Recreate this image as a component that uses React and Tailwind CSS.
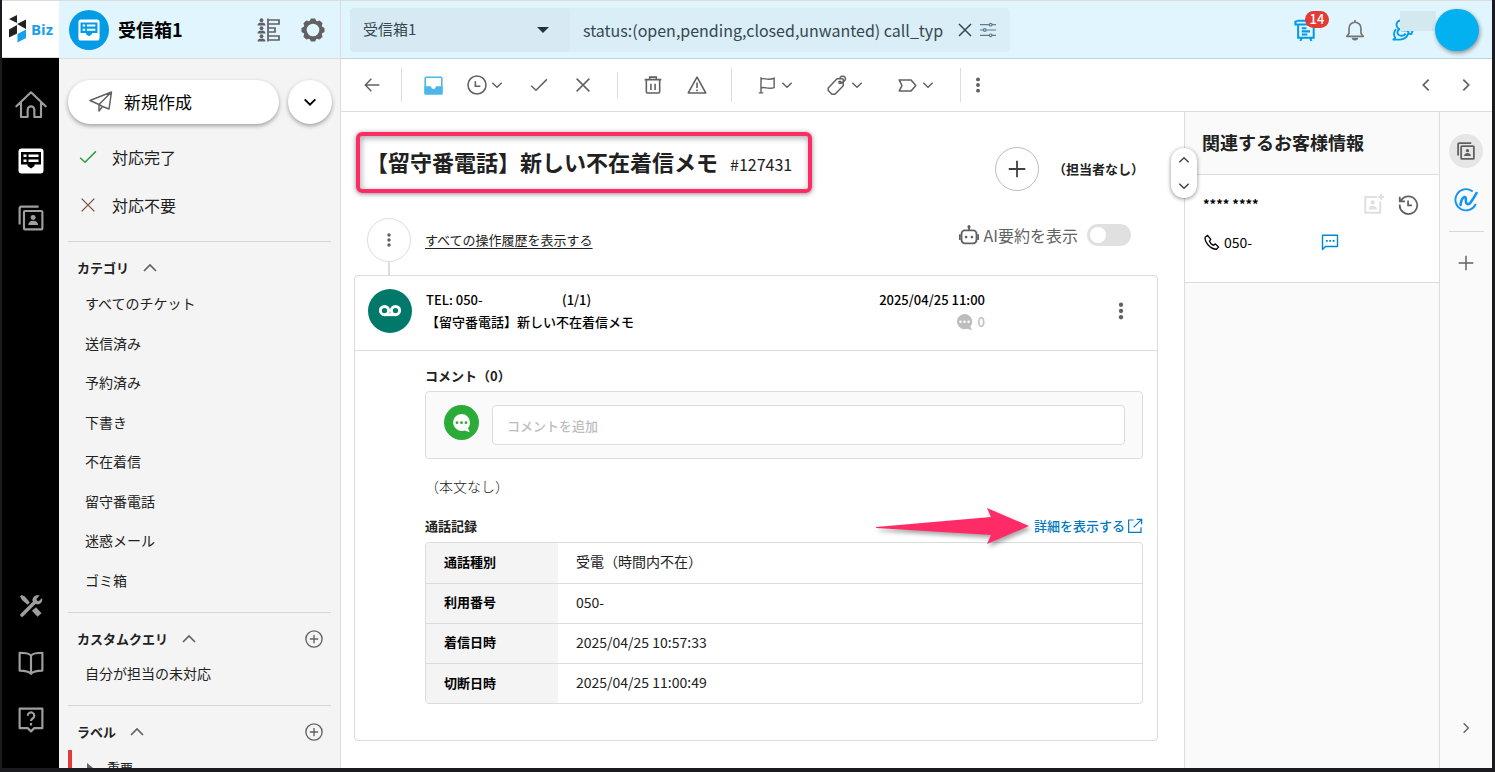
import React from 'react';

const categories = ['すべてのチケット', '送信済み', '予約済み', '下書き', '不在着信', '留守番電話', '迷惑メール', 'ゴミ箱'];

const callRecord = [
  ['通話種別', '受電（時間内不在）'],
  ['利用番号', '050-'],
  ['着信日時', '2025/04/25 10:57:33'],
  ['切断日時', '2025/04/25 11:00:49'],
];

function Icon({ size = 24, sw = 1.5, className = '', children }) {
  return (
    <svg width={size} height={size} viewBox="0 0 24 24" fill="none" stroke="currentColor" strokeWidth={sw} className={`shrink-0 ${className}`} aria-hidden="true">
      {children}
    </svg>
  );
}

const Chevron = ({ dir = 'down', size = 16, sw = 2.4, className }) => {
  const d = { down: 'M4 8l8 8 8-8', up: 'M4 16l8-8 8 8', left: 'M16 4l-8 8 8 8', right: 'M8 4l8 8-8 8' }[dir];
  return <Icon size={size} sw={sw} className={className}><path d={d} /></Icon>;
};

const Dots = ({ size = 20 }) => (
  <Icon size={size}>
    <g fill="currentColor" stroke="none">
      <circle cx="12" cy="4.5" r="2.6" />
      <circle cx="12" cy="12" r="2.6" />
      <circle cx="12" cy="19.5" r="2.6" />
    </g>
  </Icon>
);

const TicketIcon = ({ size = 26, className, cut }) => (
  <svg width={size} height={size} viewBox="0 0 26 26" className={className} aria-hidden="true">
    <rect x="0.5" y="0.5" width="25" height="25" rx="3" fill="#fff" />
    <path d="M3 4h20v12.5h-6.5v1.5L13 20.5 9.5 18v-1.5H3z" fill={cut} />
    <path d="M5.5 6.5h3v2.500h-3zM10.5 6.5h10v2.5h-10zM5.5 11.5h3V14h-3zM10.5 11.5h10V14h-10z" fill="#fff" />
  </svg>
);

const ContactsIcon = ({ size, sw = 2 }) => (
  <Icon size={size} sw={sw}>
    <path d="M1.5 18V3A1.5 1.5 0 0 1 3 1.500h16" />
    <rect x="5.5" y="5.5" width="17" height="17" rx="1" />
    <g fill="currentColor" stroke="none">
      <circle cx="14" cy="11.5" r="2.300" />
      <path d="M9.5 18.5c0-2.600 2-4 4.500-4s4.500 1.400 4.500 4z" />
    </g>
  </Icon>
);

const Bubble = ({ size, dot, className }) => (
  <svg width={size} height={size} viewBox="0 0 20 20" className={className} aria-hidden="true">
    <path d="M9.5 1A8.5 8.5 0 0 1 18 9.500c0 2.300-.8 4.200-2 5.800l1.800 4-5.300-1.800A8.5 8.5 0 1 1 9.500 1z" fill="currentColor" />
    <g fill={dot}>
      <circle cx="5" cy="9.7" r="1.4" />
      <circle cx="9.5" cy="9.7" r="1.4" />
      <circle cx="14" cy="9.7" r="1.4" />
    </g>
  </svg>
);

function Logo() {
  return (
    <a href="#" aria-label="Biz" className="flex h-[58px] items-center bg-white border-y border-[#dcdcdc] pl-[7px]">
      <svg width="18" height="30" viewBox="0 0 18 30" aria-hidden="true">
        <path d="M0 5l8-4v8zM8 10l9-4.5V15zM0 15.5L8 11v8.5l-8 4z" fill="#222" />
        <path d="M8.5 20L17 15.500V24l-8.500 4.500z" fill="#18a0ea" />
      </svg>
      <span className="ml-1 font-['Open_Sans'] text-[15px] font-bold text-[#18a0ea]">Biz</span>
    </a>
  );
}

function NavRail() {
  return (
    <nav className="flex w-[57px] shrink-0 flex-col bg-black text-[#9e9e9e]">
      <Logo />
      <div className="flex flex-1 flex-col items-center pt-[31px] pb-[35px]">
        <button aria-label="ホーム" className="mb-[27px]">
          <Icon size={32} sw={1.6}><path d="M1 13L12 2.5 23 13M4.500 10.500V21h5v-5.500a2.500 2.500 0 0 1 5 0V21h5V10.500" strokeLinejoin="round" strokeLinecap="round" /></Icon>
        </button>
        <button aria-label="チケット"><TicketIcon cut="#000" /></button>
        <button aria-label="連絡先" className="mt-[31px]"><ContactsIcon size={26} /></button>
        <button aria-label="ツール" className="mt-auto">
          <svg width="26" height="26" viewBox="0 0 26 26" fill="none" stroke="currentColor" aria-hidden="true">
            <path d="M4 22L17 9" strokeWidth="3.6" strokeLinecap="round" />
            <path d="M21.700 2.500l-3.200 3.200.4 2 2 .4 3.200-3.200c1 4-2 7-6 6.300L14.500 8c-.5-4 3-6.800 7.200-5.500z" fill="currentColor" stroke="none" />
            <path d="M2 3.500L3.500 2 7 3.500l4.800 6-2.300 2.300L4 7z" fill="currentColor" stroke="none" />
            <path d="M16 16l5.500 6" strokeWidth="5.500" />
          </svg>
        </button>
        <button aria-label="マニュアル" className="mt-[31px]">
          <Icon size={26} sw={2}><path d="M12 5C10 3 6 2.500 1.500 2.500V19c5 0 8.500.5 10.500 3 2-2.500 5.500-3 10.500-3V2.500C18 2.500 14 3 12 5zM12 5v17" strokeLinejoin="round" /></Icon>
        </button>
        <button aria-label="ヘルプ" className="mt-[31px]">
          <Icon size={26} sw={2}>
            <path d="M1.500 1.500h21v18H15l-3 3-3-3H1.500z" strokeLinejoin="round" />
            <path d="M9 8a3 3 0 1 1 4.500 2.600c-1 .6-1.500 1-1.500 2.400M12 14.800v2.200" />
          </Icon>
        </button>
      </div>
    </nav>
  );
}

function SectionHead({ title, add }) {
  return (
    <div className="flex h-6 items-center pl-[9px] pr-2">
      <h2 className="text-[13px] font-bold">{title}</h2>
      <button aria-label={`${title}を閉じる`} className="ml-3 text-[#616161]"><Chevron dir="up" size={18} sw={2.200} /></button>
      {add && (
        <button aria-label={`${title}を追加`} className="ml-auto text-[#616161]">
          <Icon size={18} sw={1.8}><circle cx="12" cy="12" r="10.8" /><path d="M12 6.500v11M6.500 12h11" /></Icon>
        </button>
      )}
    </div>
  );
}

function GearIcon() {
  return (
    <Icon size={24}>
      <g fill="currentColor" stroke="none">
        {[0, 45, 90, 135, 180, 225, 270, 315].map((a) => (
          <path key={a} d="M8 4L10 .5h4L16 4z" transform={`rotate(${a} 12 12)`} />
        ))}
      </g>
      <circle cx="12" cy="12" r="7.8" strokeWidth="3" />
    </Icon>
  );
}

function Sidebar() {
  return (
    <aside className="flex w-[282px] shrink-0 flex-col overflow-hidden border-r border-[#dcdcdc] bg-[#f4f4f4] text-[#212121]">
      <div className="flex h-[59px] shrink-0 items-center border-y border-[#dcdcdc] bg-[#e1f5fe] pl-[10px] pr-[15px]">
        <span className="flex size-10 items-center justify-center rounded-full bg-[#039be5]">
          <TicketIcon size={22} cut="#039be5" />
        </span>
        <h1 className="ml-[9px] pb-px text-[18px] font-bold text-black">受信箱1</h1>
        <button aria-label="担当者一覧" className="ml-auto text-[#616161]">
          <Icon size={24} sw={1.7}>
            <path d="M11 .5v23" />
            <path d="M11 2h11v4H11M11 10h7v4h-7M11 18h11v4H11" />
            <g fill="currentColor" stroke="none">
              <circle cx="4.5" cy="2.2" r="1.9" /><path d="M.5 7.500a4 3 0 0 1 8 0z" />
              <circle cx="4.5" cy="10.2" r="1.9" /><path d="M.5 15.500a4 3 0 0 1 8 0z" />
              <circle cx="4.5" cy="18.2" r="1.9" /><path d="M.5 23.500a4 3 0 0 1 8 0z" />
            </g>
          </Icon>
        </button>
        <button aria-label="設定" className="ml-5 text-[#616161]"><GearIcon /></button>
      </div>

      <div className="flex flex-col px-[9px] pt-[21px]">
        <div className="flex gap-[9px]">
          <button className="flex h-11 w-[211px] items-center rounded-full bg-white pl-[21px] text-[17px] text-black shadow-[0_2px_4px_rgba(0,0,0,0.35)]">
            <Icon size={24} sw={1.5} className="text-[#616161]"><path d="M1 10.500L22.500 2 20 19l-6.500-2.500L10 21v-6.500zM10 14.500L22.500 2M1 10.500l9 4M13.500 16.500L10 14.500" strokeLinejoin="round" /></Icon>
            <span className="ml-[11px]">新規作成</span>
          </button>
          <button aria-label="新規作成メニュー" className="flex size-11 shrink-0 items-center justify-center rounded-full bg-white text-black shadow-[0_2px_4px_rgba(0,0,0,0.35)]">
            <Chevron sw={2.8} />
          </button>
        </div>
        <button className="mt-[9px] flex h-12 items-center pl-[11px] text-[16px]">
          <Icon size={18} sw={2} className="text-[#2e9e3e]"><path d="M1.500 13L8 19 22.500 4.500" /></Icon>
          <span className="ml-[15px]">対応完了</span>
        </button>
        <button className="flex h-12 items-center pl-[11px] text-[16px]">
          <Icon size={18} sw={1.8} className="text-[#795548]"><path d="M3.500 3.500l17 17M20.500 3.500l-17 17" /></Icon>
          <span className="ml-[15px]">対応不要</span>
        </button>
        <hr className="mt-3 mb-[14px] border-[#d6d6d6]" />
        <SectionHead title="カテゴリ" />
        <ul className="mt-1 grid h-79 grid-rows-8 text-[14px]">
          {categories.map((c) => (
            <li key={c} className="flex items-center pl-[17px]"><a href="#">{c}</a></li>
          ))}
        </ul>
        <hr className="mt-3 mb-[14px] border-[#d6d6d6]" />
        <SectionHead title="カスタムクエリ" add />
        <a href="#" className="mt-[10px] pl-[17px] text-[14px] leading-6">自分が担当の未対応</a>
        <hr className="mt-5 mb-[14px] border-[#d6d6d6]" />
        <SectionHead title="ラベル" add />
        <a href="#" className="mt-[6px] flex h-9 items-center border-l-4 border-[#e53935] pl-[15px] text-[13px]">
          <span className="border-y-[5px] border-l-[6px] border-y-transparent border-l-[#616161]" />
          <span className="ml-[14px]">重要</span>
        </a>
      </div>
    </aside>
  );
}

function TopBar() {
  return (
    <header className="flex h-[59px] shrink-0 items-center border-t border-b border-t-[#dcdcdc] border-b-[#b9d3df] bg-[#e1f5fe] pl-[9px] pr-[13px]">
      <div className="flex h-11 w-[660px] items-center rounded-[4px] bg-[#daeef8] text-[#37474f]">
        <div className="relative h-11 w-[220px] rounded-[4px] bg-[#d7eaf4]">
          <select aria-label="受信箱" className="h-full w-full appearance-none bg-transparent pl-[13px] text-[15px]" defaultValue="受信箱1">
            <option>受信箱1</option>
          </select>
          <span className="pointer-events-none absolute right-[21px] top-[19px] border-x-[6px] border-t-[6px] border-x-transparent border-t-[#263238]" />
        </div>
        <input aria-label="検索" className="ml-[13px] w-[374px] bg-transparent text-[16px] outline-none" defaultValue="status:(open,pending,closed,unwanted) call_typ" />
        <button aria-label="クリア"><Icon size={16} sw={2.2}><path d="M3 3l18 18M21 3L3 21" /></Icon></button>
        <button aria-label="検索条件" className="ml-[7px] text-[#607d8b]">
          <Icon size={16} sw={1.8}><path d="M0 4h24M0 12h24M0 20h24" /><g fill="#daeef8"><circle cx="16" cy="4" r="2" /><circle cx="7" cy="12" r="2" /><circle cx="16" cy="20" r="2" /></g></Icon>
        </button>
      </div>

      <div className="ml-auto flex items-center text-[#039be5]">
        <button aria-label="お知らせ 14件" className="relative">
          <Icon size={22} sw={2.2}>
            <path d="M4 2L1.500 3v3H21M4 2h16M4.500 6v14.500h17V6M8.500 20.500L7 24M17.500 20.500L19 24M8.500 10h5M8.500 13.500h9M8.500 17h6" />
          </Icon>
          <span className="absolute -top-2 left-[11px] flex h-[17px] w-6 items-center justify-center rounded-full bg-[#e53935] text-[13px] font-medium text-white">14</span>
        </button>
        <button aria-label="通知" className="ml-7 text-[#757575]">
          <Icon size={22} sw={1.8}><path d="M3 19h18l-2.500-3.500V10a6.500 6.500 0 0 0-13 0v5.500zM12 3.500V1" strokeLinejoin="round" /><path d="M8.500 20.500a3.500 3 0 0 0 7 0z" fill="currentColor" stroke="none" /></Icon>
        </button>
        <span className="relative ml-[26px] mr-[21px]">
          <Icon size={22} sw={2}>
            <path d="M9 1.500C4 2.500 4 8 7 10.500c3 2 7 2.500 10 2l6-.5-2 4.500-3.500-.5c-1 4-4.500 6-9 6.500H1.500l2-2C1.500 18 2 13.500 4.500 11M7.500 11c-2 3-1.500 5.500 0 6.500 2.500 1.500 6 .5 7.500-1.500M17 13l1.500 3" strokeLinejoin="round" />
            <circle cx="10" cy="6.500" r="1.2" fill="currentColor" stroke="none" />
          </Icon>
          <span className="absolute -top-2 left-2 h-5 w-9 bg-[#d3e9ef]" />
        </span>
        <button aria-label="アカウント" className="z-10 h-[42px] w-11 rounded-full bg-[#03b1f0] shadow-[1px_2px_4px_rgba(0,0,0,0.4)]" />
      </div>
    </header>
  );
}

const Divider = ({ className = '' }) => <span className={`w-px bg-[#dcdcdc] ${className}`} />;

function Toolbar() {
  return (
    <div className="flex h-[53px] shrink-0 items-center border-b border-[#dcdcdc] pl-[23px] pr-[18px] text-[#616161]">
      <button aria-label="戻る"><Icon size={16} sw={2.2}><path d="M23 12H2M11 2.500L2 12l9 9.500" /></Icon></button>
      <Divider className="ml-[21px] h-[34px]" />
      <button aria-label="受信箱へ" className="ml-[22px] text-[#4db6ea]">
        <Icon size={19} sw={2}>
          <rect x="1.500" y="1.500" width="21" height="21" rx="1.500" />
          <path d="M1.500 14H8l1.500 3h5l1.500-3h6.500v8.500h-21z" fill="currentColor" />
        </Icon>
      </button>
      <button aria-label="保留" className="ml-6 flex items-center gap-[3px]">
        <Icon size={20} sw={1.9}><circle cx="12" cy="12" r="10.800" /><path d="M10 7.500v6h6" /></Icon>
        <Chevron size={14} />
      </button>
      <button aria-label="対応完了にする" className="ml-[26px]"><Icon size={18} sw={2}><path d="M1.500 13L8 19 22.500 4.500" /></Icon></button>
      <button aria-label="対応不要にする" className="ml-[26px]"><Icon size={18} sw={2}><path d="M3.500 3.500l17 17M20.500 3.500l-17 17" /></Icon></button>
      <Divider className="ml-[25px] h-[26px]" />
      <button aria-label="削除" className="ml-[25px]">
        <Icon size={20} sw={1.9}><path d="M2 5.500h20M8 5V2.500h8V5M4 5.500V20a1.500 1.500 0 0 0 1.500 1.500h13A1.500 1.500 0 0 0 20 20V5.500M9.500 10.500v7.500M14.500 10.500v7.500" /></Icon>
      </button>
      <button aria-label="迷惑メール" className="ml-6">
        <Icon size={20} sw={1.9}><path d="M12 2.500L1.500 21.500h21z" strokeLinejoin="round" /><path d="M12 9v6.500M12 17.500v2" /></Icon>
      </button>
      <Divider className="ml-6 h-[34px]" />
      <button aria-label="フラグ" className="ml-[26px] flex items-center gap-1">
        <Icon size={18} sw={1.9}><path d="M4 23V1.500M1 22.500h6M4 4c5-2 8 2.500 17.500-1v12.500C13 18.500 9 13.500 4 16" /></Icon>
        <Chevron size={14} />
      </button>
      <button aria-label="タグ" className="ml-[33px] flex items-center gap-[3px]">
        <Icon size={20} sw={1.8}><path d="M12 4.500L1.500 15.500v3l4.500 4.500h3.500L19.500 13V5.500l-1-1zM15 9.500c5 0 8.500-4 6.500-7-2-2-6-1-6 1.500" strokeLinejoin="round" /><circle cx="15.500" cy="8.800" r="1.300" /></Icon>
        <Chevron size={14} />
      </button>
      <button aria-label="ラベル" className="ml-[34px] flex items-center gap-1">
        <Icon size={19} sw={2}><path d="M1.500 5h15l6 7-6 7h-15l3.500-7z" strokeLinejoin="round" /></Icon>
        <Chevron size={14} />
      </button>
      <Divider className="ml-[25px] h-[34px]" />
      <button aria-label="その他" className="ml-2"><Dots size={18} /></button>
      <button aria-label="前へ" className="ml-auto"><Chevron dir="left" sw={2.6} /></button>
      <button aria-label="次へ" className="ml-6"><Chevron dir="right" sw={2.6} /></button>
    </div>
  );
}

function CallRecord() {
  return (
    <section className="mt-[14px]">
      <div className="mb-1 flex h-[25px] items-center justify-between text-[13px]">
        <h3 className="font-bold">通話記録</h3>
        <a href="#" className="relative flex items-center gap-0.5 font-medium text-[#0277bd]">
          詳細を表示する
          <Icon size={16} sw={1.8}><path d="M10 3H2.500v18.500H21V14M14.500 2h7.500v7.500M22 2L10 14" /></Icon>
          <svg width="160" height="44" viewBox="0 0 160 44" className="absolute right-full top-1/2 -mt-[18px] mr-0.5 drop-shadow-[2px_3px_2px_rgba(0,0,0,0.35)]" aria-hidden="true">
            <path d="M4 19L119 9 115 0l42 18-42 18 4-9L4 20z" fill="#ff2b66" />
          </svg>
        </a>
      </div>
      <div className="overflow-hidden rounded-[4px] border border-[#dcdcdc]">
        <table className="w-full text-left text-[14px]">
          <tbody>
            {callRecord.map(([k, v], i) => (
              <tr key={k} className={i ? 'border-t border-[#dcdcdc]' : ''}>
                <th scope="row" className="h-10 w-[132px] bg-[#f4f4f4] pb-0.5 pl-[18px] text-[13px] font-bold text-black">{k}</th>
                <td className="pb-0.5 pl-[18px] text-[#212121]">{v}</td>
              </tr>
            ))}
          </tbody>
        </table>
      </div>
    </section>
  );
}

function TicketCard() {
  return (
    <article className="rounded-[4px] border border-[#dcdcdc] pb-9">
      <div className="flex h-[75px] border-b border-[#dcdcdc] pl-[13px] pr-[26px] pt-[13px]">
        <span className="flex size-11 shrink-0 items-center justify-center rounded-full bg-[#00796b] text-white">
          <Icon size={22} sw={3.2}><circle cx="6" cy="11.500" r="4.500" /><circle cx="18" cy="11.500" r="4.500" /><path d="M6 16h12" /></Icon>
        </span>
        <div className="ml-[14px] flex-1 text-[13px] font-medium leading-[22px] text-black">
          <div className="flex"><span className="w-[136px]">TEL: 050-</span><span>(1/1)</span></div>
          <div>【留守番電話】新しい不在着信メモ</div>
        </div>
        <div className="mr-[126px] text-right text-[13px] font-medium leading-[22px] text-black">
          <div>2025/04/25 11:00</div>
          <div className="flex items-center justify-end gap-1 text-[#bdbdbd]"><Bubble size={18} dot="#fff" />0</div>
        </div>
        <button aria-label="メニュー" className="h-11 text-[#616161]"><Dots size={20} /></button>
      </div>

      <div className="pl-[70px] pr-[14px] pt-[13px]">
        <h3 className="text-[13px] font-bold leading-6 text-[#212121]">コメント（0）</h3>
        <div className="mt-[3px] flex h-[68px] items-center gap-[13px] rounded-[4px] border border-[#dcdcdc] bg-[#fafafa] pl-[18px] pr-[17px]">
          <span className="mb-[5px] flex size-[35px] shrink-0 items-center justify-center rounded-full bg-[#2bac38] text-white"><Bubble size={20} dot="#2bac38" /></span>
          <input aria-label="コメントを追加" placeholder="コメントを追加" className="h-10 min-w-0 flex-1 rounded-[4px] border border-[#dcdcdc] bg-white px-[14px] text-[13px] font-medium placeholder:text-[#bdbdbd]" />
        </div>
        <p className="mt-[15px] text-[14px] font-light leading-[25px] text-[#212121]">（本文なし）</p>
        <CallRecord />
      </div>
    </article>
  );
}

function TicketView() {
  return (
    <main className="min-w-0 flex-1 overflow-hidden pl-[13px] pr-[26px] pt-5 text-[#212121]">
      <div className="flex items-start">
        <div className="ml-[2px] flex h-[61px] items-center rounded-[6px] border-4 border-[#ff2b66] pb-0.5 pl-[6px] pr-4 shadow-[0_1px_5px_rgba(0,0,0,0.45),inset_1px_2px_6px_rgba(0,0,0,0.35)]">
          <h2 className="text-[22px] font-bold">【留守番電話】新しい不在着信メモ</h2>
          <span className="ml-3 pt-1 text-[16px]">#127431</span>
        </div>
        <div className="ml-auto mr-[14px] mt-[15px] flex items-center gap-[14px]">
          <button aria-label="担当者を追加" className="flex size-11 items-center justify-center rounded-full border border-[#bdbdbd] text-[#424242]">
            <Icon size={18} sw={2.4}><path d="M12 1v22M1 12h22" /></Icon>
          </button>
          <span className="text-[13px] font-bold">（担当者なし）</span>
        </div>
      </div>

      <div className="mt-[25px] flex pl-[13px] pr-[27px]">
        <div className="flex flex-col items-center">
          <button aria-label="操作履歴" className="flex size-11 items-center justify-center rounded-full border border-[#dcdcdc] text-[#616161]"><Dots size={16} /></button>
          <span className="h-[13px] w-[2px] bg-[#dcdcdc]" />
        </div>
        <a href="#" className="ml-[14px] flex h-11 items-center text-[13px] underline underline-offset-3">すべての操作履歴を表示する</a>
        <label className="ml-auto flex h-[34px] items-center text-[16px] text-[#616161]">
          <Icon size={20} sw={2.2}>
            <rect x="3" y="6.500" width="18" height="15.500" rx="4" />
            <path d="M12 6V2M1 11v7M23 11v7" />
            <g fill="currentColor" stroke="none"><circle cx="12" cy="2" r="1.900" /><circle cx="8.500" cy="14.500" r="1.600" /><circle cx="15.500" cy="14.500" r="1.600" /></g>
          </Icon>
          <span className="ml-[5px]">AI要約を表示</span>
          <input type="checkbox" role="switch" className="ml-[9px] h-[22px] w-11 appearance-none rounded-full bg-[#e0e0e0] before:m-[3px] before:block before:size-4 before:rounded-full before:bg-white" />
        </label>
      </div>
      <TicketCard />
    </main>
  );
}

function CustomerPanel() {
  return (
    <aside className="relative w-[255px] shrink-0 border-l border-[#dcdcdc] bg-[#fafafa]">
      <div className="flex h-[63px] items-center border-b border-[#dcdcdc] pb-0.5 pl-[17px]">
        <h2 className="text-[18px] font-bold text-[#212121]">関連するお客様情報</h2>
      </div>
      <div className="h-[108px] border-b border-[#dcdcdc] bg-white pl-[18px] pr-5 pt-[17px] text-black">
        <div className="flex h-6 items-center">
          <span className="text-[13px] font-bold">**** ****</span>
          <button aria-label="お客様を登録" className="ml-auto text-[#e0e0e0]">
            <Icon size={20} sw={2.4}>
              <path d="M16 3.500H1.500V22.500h18V9M20.500 0v7M17 3.500h7" />
              <g fill="currentColor" stroke="none"><circle cx="10.500" cy="10" r="2.600" /><path d="M5.500 18.500c0-6 10-6 10 0z" /></g>
            </Icon>
          </button>
          <button aria-label="履歴" className="ml-[14px] text-[#616161]">
            <Icon size={21} sw={2}><path d="M3.500 7.500A10 10 0 1 1 2 12M2 3v5.500h6M11.500 7.500V13H16" /></Icon>
          </button>
        </div>
        <div className="mt-[14px] flex h-6 items-center">
          <Icon size={17} sw={1.9}><path d="M6.500 2L3 4.500C2 12 11 21.500 19 21.500l3-3-4.500-4.500-3 2c-2.500-1-4.500-3-5.500-6l2-2.500z" strokeLinejoin="round" /></Icon>
          <span className="ml-1 text-[14px]">050-</span>
          <button aria-label="メッセージ" className="ml-[69px] text-[#0288d1]">
            <Icon size={18} sw={1.9}><path d="M2 3h20v15H6L2 22z" strokeLinejoin="round" /><path d="M6.500 10.500H9M11 10.500h2.500M15.500 10.500H18" strokeWidth="2.500" /></Icon>
          </button>
        </div>
      </div>

      {/* pane scroll handle, straddles the border */}
      <div className="absolute -left-[14px] top-9 flex h-[50px] w-[26px] flex-col items-center justify-between rounded-full bg-white py-[5px] text-[#424242] shadow-[0_1px_4px_rgba(0,0,0,0.45)]">
        <button aria-label="上へ"><Chevron dir="up" size={14} /></button>
        <button aria-label="下へ"><Chevron size={14} /></button>
      </div>
    </aside>
  );
}

function AppRail() {
  return (
    <aside className="flex w-[53px] shrink-0 flex-col items-center border-l border-[#dcdcdc] bg-[#fafafa] pb-[33px] pt-[22px] text-[#616161]">
      <button aria-label="お客様情報" className="flex size-[34px] items-center justify-center rounded-full bg-[#e6e6e6]"><ContactsIcon size={18} sw={2.4} /></button>
      <button aria-label="連携" className="mt-5 text-[#1296f3]">
        <Icon size={24} sw={1.9}>
          <path d="M18 3A10.600 10.600 0 1 0 21.500 16.500" strokeLinecap="round" />
          <path d="M6.500 17c.5-4 2-7.500 4-8 2.500-.2.500 4.500 2 6.500 1 1.200 3 .8 4.500-1.500 2-3 3.500-5 5.500-9" strokeLinecap="round" strokeWidth="2.600" />
        </Icon>
      </button>
      <span className="mt-[19px] h-px w-[35px] bg-[#d6d6d6]" />
      <button aria-label="追加" className="mt-[23px]"><Icon size={16} sw={2.2}><path d="M12 1v22M1 12h22" /></Icon></button>
      <button aria-label="パネルを閉じる" className="mt-auto"><Chevron dir="right" size={14} /></button>
    </aside>
  );
}

export default function App() {
  return (
    <div className="flex h-screen overflow-hidden bg-[#1b1b1f] pb-1 pl-0.5 pr-[3px] font-['Noto_Sans_CJK_JP',sans-serif] [&_button]:shrink-0">
      <NavRail />
      <Sidebar />
      <div className="flex min-w-0 flex-1 flex-col bg-white">
        <TopBar />
        <Toolbar />
        <div className="flex min-h-0 flex-1">
          <TicketView />
          <CustomerPanel />
          <AppRail />
        </div>
      </div>
    </div>
  );
}
